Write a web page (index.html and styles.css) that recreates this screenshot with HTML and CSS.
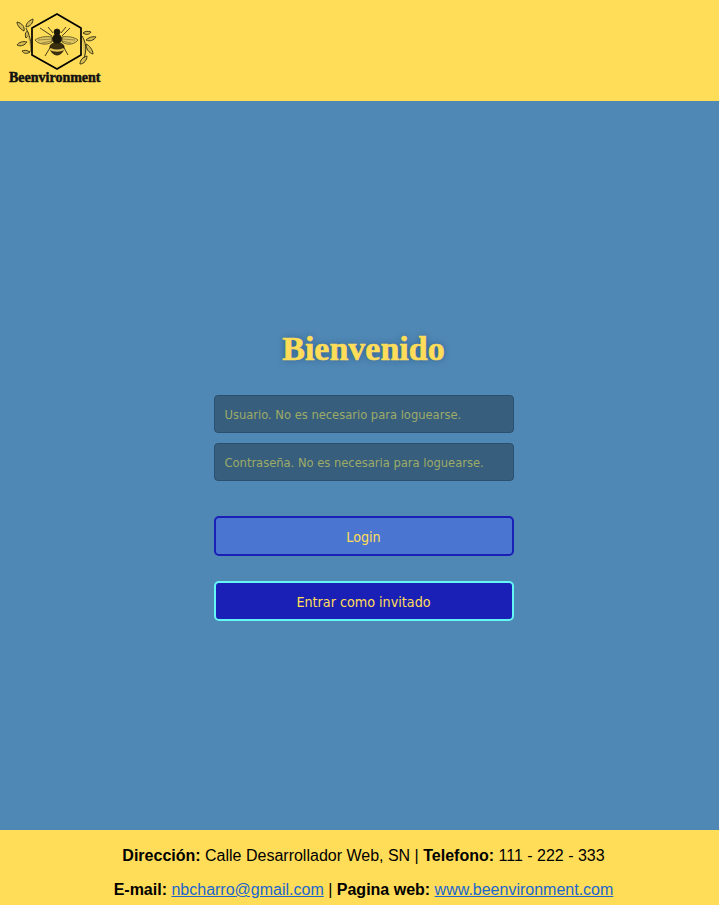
FILE: index.html
```html
<!DOCTYPE html>
<html lang="es">
<head>
  <meta charset="UTF-8" />
  <meta name="viewport" content="width=device-width, initial-scale=1.0"/>
  <title>Beenvironment</title>
  <link rel="stylesheet" href="styles.css">
</head>
<body>
  <header class="top-bar">
    <div class="logo">
      <svg class="logo-mark" width="110" height="71" viewBox="0 0 110 71">
        <!-- hojas -->
        <g class="leaves">
          <path d="M24 31c-4-2-7-6-7-9 5 1 8 5 7 9z"/>
          <path d="M26 27c0-3 2-6 7-8 0 4-2 7-7 8z"/>
          <path d="M17 45c2-3 6-4 10-3-2 3-6 5-10 3z"/>
          <path d="M22 51c2-1 5-1 8 1-3 2-6 2-8-1z"/>
          <path d="M26 38c-1-3-1-5 1-7 2 2 2 5-1 7z"/>
          <path d="M26 28c3 6 6 14 5 24"/>
          <path d="M83 33c2-2 5-2 8-1-2 3-5 3-8 1z"/>
          <path d="M86 40c2-2 6-4 10-3-2 3-6 5-10 3z"/>
          <path d="M86 44c3 1 7 6 7 10-4-1-7-5-7-10z"/>
          <path d="M80 64c0-4 3-7 7-8 0 4-3 8-7 8z"/>
          <path d="M82 36c4 6 5 14 2 22"/>
        </g>
        <!-- panal -->
        <polygon class="hex" points="57,14 81,28 81,55 57,69 32,55 32,28"/>
        <!-- abeja -->
        <g class="bee">
          <path class="wing" d="M52 37c-6-1-13 0-17 3 3 4 11 6 17 2z"/>
          <path class="wing" d="M62 37c6-1 12 0 16 3-3 4-10 6-16 2z"/>
          <path class="vein" d="M38 40l14-1M42 43l10-2M75 40l-13-1M71 43l-9-2"/>
          <circle cx="57" cy="32" r="3"/>
          <ellipse cx="57" cy="39" rx="4.5" ry="5"/>
          <path class="abdomen" d="M50 47c0-3 3-4 7-4s7 1 7 4c0 5-4 8-7 8s-7-3-7-8z"/>
          <path class="stripe" d="M50 49c4 2 10 2 14 0"/>
          <path d="M53 33l-5-6M61 33l5-6M52 36l-12-8M62 36l8-8M51 46l-6 10M63 46l5 9"/>
        </g>
      </svg>
      <span class="logo-name">Beenvironment</span>
    </div>
  </header>

  <main class="content">
    <h1>Bienvenido</h1>
    <form class="login-form">
      <input class="field" type="text" placeholder="Usuario. No es necesario para loguearse.">
      <input class="field" type="password" placeholder="Contraseña. No es necesaria para loguearse.">
      <button class="btn btn-login" type="button">Login</button>
      <button class="btn btn-guest" type="button">Entrar como invitado</button>
    </form>
  </main>

  <footer class="bottom-bar">
    <p><b>Dirección:</b> Calle Desarrollador Web, SN | <b>Telefono:</b> 111 - 222 - 333</p>
    <p><b>E-mail:</b> <a href="#">nbcharro@gmail.com</a> | <b>Pagina web:</b> <a href="#">www.beenvironment.com</a></p>
  </footer>
</body>
</html>
```

FILE: styles.css
```css
html, body {
  height: 100%;
}

body {
  margin: 0;
  display: flex;
  flex-direction: column;
  min-height: 905px;
  background-color: #5088b5;
  font-family: "Liberation Sans", Arial, sans-serif;
}

.top-bar {
  height: 101px;
  flex: none;
  background-color: #ffdd59;
}

.logo {
  width: 110px;
  display: flex;
  flex-direction: column;
}

.logo-mark {
  display: block;
}

.logo-name {
  padding-left: 9px;
  font-family: "Liberation Serif", serif;
  font-weight: bold;
  font-size: 14px;
  line-height: 13px;
  color: #111;
  -webkit-text-stroke: 0.5px #111;
}

.hex {
  fill: none;
  stroke: #000;
  stroke-width: 1.7;
}

.leaves path {
  fill: #d8bc50;
  stroke: #3a3616;
  stroke-width: 1;
}

.bee {
  fill: #1a1608;
  stroke: #1a1608;
  stroke-width: 0.8;
}

.bee .wing {
  fill: #e0c662;
  stroke: #3a3616;
  stroke-width: 0.7;
}

.bee .vein {
  fill: none;
  stroke: #5a4f20;
  stroke-width: 0.5;
}

.bee .abdomen {
  fill: #3a3010;
}

.bee .stripe {
  fill: none;
  stroke: #e8c850;
  stroke-width: 2.5;
}

.content {
  flex: 1;
  padding-left: 8px;
  display: flex;
  flex-direction: column;
  align-items: center;
  justify-content: center;
}

h1 {
  margin: 20px 0 28px;
  font-family: "Liberation Serif", serif;
  font-size: 34px;
  line-height: 37px;
  color: #ffdd59;
  text-shadow: 0 0 7px #2a5a85;
  -webkit-text-stroke: 0.6px #ffdd59;
}

.login-form {
  width: 300px;
  display: flex;
  flex-direction: column;
}

.field {
  box-sizing: border-box;
  height: 38px;
  margin-bottom: 10px;
  padding: 0 10px;
  border: 1px solid #2a4f6f;
  border-radius: 4px;
  background-color: #385e7d;
  font-family: "DejaVu Sans Condensed", "DejaVu Sans", sans-serif;
  font-stretch: condensed;
  font-size: 12.8px;
  color: #ffdd59;
}

.field::placeholder {
  color: #9cab68;
  opacity: 1;
}

.field + .btn {
  margin-top: 25px;
}

.btn {
  box-sizing: border-box;
  height: 40px;
  padding-top: 2px;
  border-radius: 5px;
  border: 2px solid #1a20b5;
  font-family: "DejaVu Sans Condensed", "DejaVu Sans", sans-serif;
  font-stretch: condensed;
  font-size: 14.2px;
  color: #ffdd59;
}

.btn-login {
  background-color: #4a76d2;
}

.btn-guest {
  margin-top: 25px;
  background-color: #1a20b5;
  border-color: #66f5f5;
}

.bottom-bar {
  height: 75px;
  flex: none;
  box-sizing: border-box;
  padding: 17px 0 0 8px;
  background-color: #ffdd59;
  text-align: center;
  font-size: 16px;
  color: #000;
}

.bottom-bar p {
  margin: 0 0 16px;
  line-height: 18px;
}

.bottom-bar a {
  color: #1a66cc;
}
```
